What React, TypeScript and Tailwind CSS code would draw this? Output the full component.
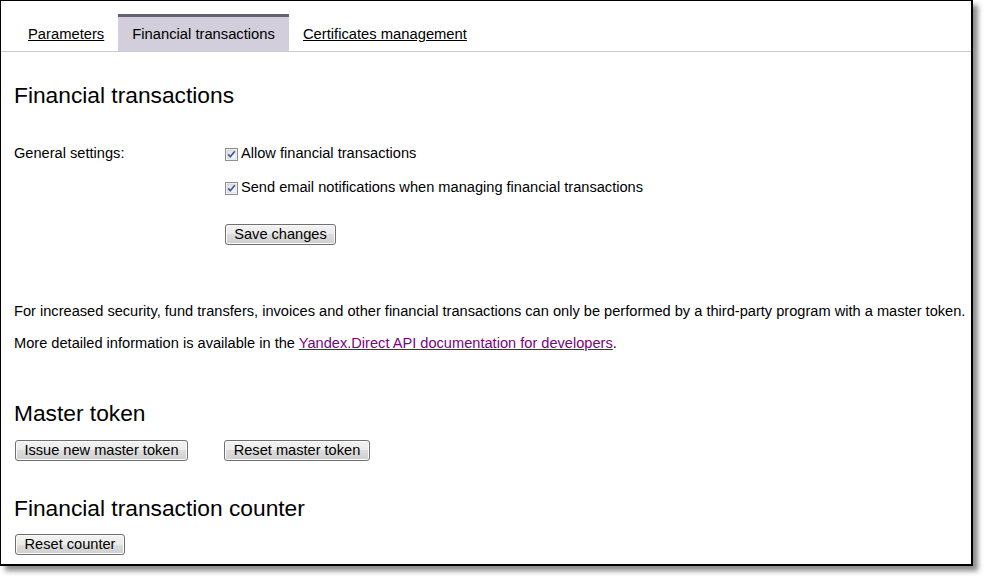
import type { ReactNode } from "react";

const font = "font-['Liberation_Sans',Arial,sans-serif]";

function Checkbox() {
  return (
    <span className="mt-[5px] mr-[3px] inline-block h-[13px] w-[13px] shrink-0">
      <svg width="13" height="13" viewBox="0 0 13 13" aria-hidden="true">
        <defs>
          <linearGradient id="cbg" x1="0" y1="0" x2="1" y2="1">
            <stop offset="0" stopColor="#dcdcdc" />
            <stop offset="1" stopColor="#ffffff" />
          </linearGradient>
        </defs>
        <rect x="0.5" y="0.5" width="12" height="12" fill="#ffffff" stroke="#8e8f8f" />
        <rect x="2" y="2" width="9" height="9" fill="url(#cbg)" stroke="#c4c4c4" strokeWidth="0.6" />
        <path d="M3.2 6.4 L5.3 8.8 L9.8 3.3" fill="none" stroke="#3a57a0" strokeWidth="1.7" strokeLinejoin="round" />
      </svg>
    </span>
  );
}

function Button({ children, width }: { children: ReactNode; width: string }) {
  return (
    <button
      type="button"
      className={`${width} h-[21px] rounded-[3px] border border-[#707070] bg-[linear-gradient(#f2f2f2_0%,#ebebeb_50%,#dddddd_50%,#cfcfcf_100%)] text-center text-[14.6px] leading-[19px] text-black shadow-[inset_0_0_0_1px_#fbfbfb]`}
    >
      {children}
    </button>
  );
}

function Tab({ label, active = false }: { label: string; active?: boolean }) {
  if (active) {
    return (
      <div className="h-[37px] border-t-[3px] border-[#675e76] bg-[#d3cedb] px-[14px] text-[14.75px] leading-[34px]">
        {label}
      </div>
    );
  }
  return (
    <div className="h-[37px] border-t-[3px] border-transparent px-[14px] text-[14.75px] leading-[34px] underline">
      {label}
    </div>
  );
}

export default function App() {
  return (
    <div className={`h-[579px] w-[985px] overflow-hidden bg-white ${font} text-[14.62px] text-black`}>
      <div className="h-[566px] w-[973px] border-t border-l border-r-2 border-b-2 border-black bg-white shadow-[5px_5px_5px_rgba(0,0,0,0.45)]">
        <div className="flex border-b border-[#cccccc] pt-[13px] pl-[13px]">
          <Tab label="Parameters" />
          <Tab label="Financial transactions" active />
          <Tab label="Certificates management" />
        </div>

        <div className="pl-[13px]">
          <h1 className="mt-[29px] text-[22.75px] leading-[28px]">Financial transactions</h1>

          <div className="mt-[34px] grid grid-cols-[211px_1fr]">
            <div className="leading-[20px]">General settings:</div>
            <div>
              <div className="flex leading-[20px]">
                <Checkbox />
                <span>Allow financial transactions</span>
              </div>
              <div className="mt-[14px] flex leading-[20px]">
                <Checkbox />
                <span>Send email notifications when managing financial transactions</span>
              </div>
              <div className="mt-[27px]">
                <Button width="w-[111px]">Save changes</Button>
              </div>
            </div>
          </div>

          <p className="mt-[55px] leading-[20px]">
            For increased security, fund transfers, invoices and other financial transactions can only be performed by a
            third-party program with a master token.
          </p>
          <p className="mt-[12px] leading-[20px]">
            More detailed information is available in the{" "}
            <a className="text-[#800080] underline">Yandex.Direct API documentation for developers</a>.
          </p>

          <h2 className="mt-[46px] text-[22.75px] leading-[28px]">Master token</h2>
          <div className="mt-[13px] ml-px flex gap-[36px]">
            <Button width="w-[173px]">Issue new master token</Button>
            <Button width="w-[146px]">Reset master token</Button>
          </div>

          <h2 className="mt-[33px] text-[22.75px] leading-[28px]">Financial transaction counter</h2>
          <div className="mt-[12px] ml-px">
            <Button width="w-[110px]">Reset counter</Button>
          </div>
        </div>
      </div>
    </div>
  );
}
